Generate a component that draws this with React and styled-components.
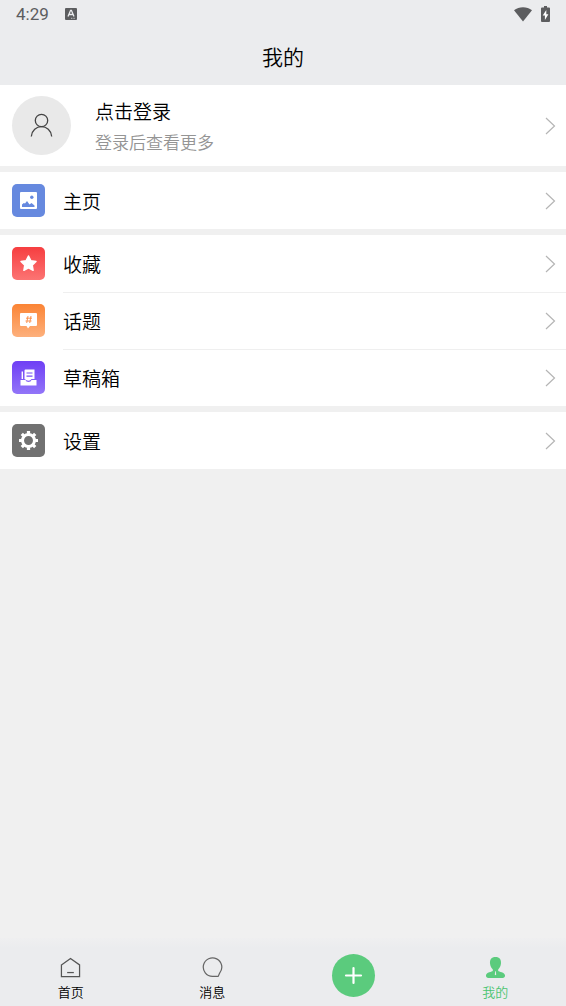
import React from "react";
import styled, { createGlobalStyle } from "styled-components";

const GlobalStyle = createGlobalStyle`
  * { box-sizing: border-box; }
  body {
    margin: 0;
    background: #f0f0f0;
    color: #000;
    font-family: Roboto, "Noto Sans CJK SC", sans-serif;
    font-weight: 350;
  }
  button { font: inherit; color: inherit; border: 0; padding: 0; background: none; cursor: pointer; }
  a { color: inherit; text-decoration: none; }
  svg { display: block; flex: none; }
`;

const Page = styled.div`
  min-height: 100vh;
  display: flex;
  flex-direction: column;
`;

const Header = styled.header`
  background: #ebecee;
`;

const StatusBar = styled.div`
  height: 28px;
  padding: 0 16px;
  display: flex;
  align-items: center;
  justify-content: space-between;
  color: #5c5d5f;
`;

const StatusGroup = styled.div`
  display: flex;
  align-items: center;
  gap: ${(p) => p.$gap}px;
`;

const Clock = styled.span`
  font-size: 17px;
  font-weight: 400;
  line-height: 28px;
`;

const Title = styled.h1`
  margin: 0;
  height: 57px;
  line-height: 60px;
  text-align: center;
  font-size: 21px;
  font-weight: inherit;
`;

const Main = styled.main`
  flex: 1;
  display: flex;
  flex-direction: column;
  gap: 6px;
`;

const Profile = styled.button`
  width: 100%;
  height: 81px;
  padding: 0 10px 0 12px;
  display: flex;
  align-items: center;
  text-align: left;
  background: #fff;
`;

const Avatar = styled.span`
  width: 59px;
  height: 59px;
  margin-right: 24px;
  border-radius: 50%;
  background: #e9e9e9;
  display: grid;
  place-items: center;
`;

const ProfileText = styled.span`
  flex: 1;
  padding-top: 4px;
  display: flex;
  flex-direction: column;
`;

const ProfileName = styled.span`
  font-size: 19px;
  line-height: 30px;
`;

const ProfileHint = styled.span`
  font-size: 17px;
  line-height: 30px;
  color: #949494;
`;

const Group = styled.nav`
  background: #fff;
`;

const Row = styled.a`
  height: 57px;
  padding-left: 12px;
  display: flex;
  align-items: center;
  gap: 18px;
`;

const Tile = styled.span`
  width: 33px;
  height: 33px;
  border-radius: 5px;
  background: ${(p) => p.$fill};
  display: grid;
  place-items: center;
`;

const RowBody = styled.span`
  flex: 1;
  height: 57px;
  padding-right: 10px;
  display: flex;
  align-items: center;
  justify-content: space-between;
  font-size: 19px;
  line-height: 28px;
  border-top: 1px solid ${(p) => (p.$divided ? "#efefef" : "transparent")};
`;

const RowLabel = styled.span`
  padding-top: 3px;
`;

const TabBar = styled.nav`
  position: sticky;
  bottom: 0;
  height: 68px;
  display: grid;
  grid-template-columns: repeat(4, 1fr);
  background: linear-gradient(#efeff0, #ebecee 10px);
`;

const Tab = styled.a`
  padding-top: 19px;
  display: flex;
  flex-direction: column;
  align-items: center;
  gap: 5px;
  font-size: 13px;
  line-height: 20px;
  color: ${(p) => (p.$active ? "#4cc471" : "#000")};
`;

const AddSlot = styled.div`
  display: grid;
  place-items: center;
  padding-top: 6px;
`;

const AddButton = styled.button`
  && {
    width: 43px;
    height: 43px;
    border-radius: 50%;
    background: #5bcb7d;
    display: grid;
    place-items: center;
  }
`;

const Chevron = () => (
  <svg width="12" height="20" viewBox="0 0 12 20" fill="none" stroke="#b5b5b5" strokeWidth="1.2">
    <path d="M2 2l8.500 8L2 18" />
  </svg>
);

const InputIcon = () => (
  <svg width="12" height="12" viewBox="0 0 12 12">
    <rect width="12" height="12" rx="1" fill="#5c5d5f" />
    <path d="M3 8.500L5.600 2.300h.8L9 8.500M4 6.500h4" fill="none" stroke="#ebecee" strokeWidth="1.300" />
    <path d="M6 10.300h4" stroke="#ebecee" strokeWidth=".7" strokeDasharray="1 .6" />
  </svg>
);

const WifiIcon = () => (
  <svg width="18" height="15" viewBox="0 0 18 15">
    <path d="M0 3.300C5-.9 13-.9 18 3.300L9 14.500z" fill="#5c5d5f" />
  </svg>
);

const BatteryIcon = () => (
  <svg width="9" height="16" viewBox="0 0 9 16">
    <path d="M3 0h3v1.600h2q1 0 1 1V15q0 1-1 1H1q-1 0-1-1V2.600q0-1 1-1h2z" fill="#5c5d5f" />
    <path d="M5.300 4L1.700 9.500h2.200V14l3.500-5.700H5.300z" fill="#fff" />
  </svg>
);

const PersonIcon = () => (
  <svg width="23" height="25" viewBox="0 0 23 25" fill="none" stroke="#444" strokeWidth="1.300">
    <circle cx="11.500" cy="7.500" r="6.200" />
    <path d="M1.300 23.500C1.800 17.500 6.500 13.700 11.500 13.700s9.700 3.800 10.200 9.800" />
  </svg>
);

const PictureIcon = () => (
  <svg width="17" height="17" viewBox="0 0 17 17">
    <rect width="17" height="17" rx="1" fill="#fff" />
    <circle cx="11.800" cy="5.200" r="1.700" fill="#6689df" />
    <path d="M2 15v-2.500l1.800-1.500 1.200.5L7 9l2.500 3.500 2-1.500 3 2.500V15z" fill="#6689df" />
  </svg>
);

const StarIcon = () => (
  <svg width="19" height="19" viewBox="0 0 19 19" fill="#fff" stroke="#fff" strokeWidth="1.500" strokeLinejoin="round">
    <path d="M9.500 2l2.300 4.700 5.200.8-3.800 3.600.9 5.200-4.600-2.400-4.600 2.400.9-5.200L2 7.500l5.200-.8z" />
  </svg>
);

const TopicIcon = () => (
  <svg width="17" height="17" viewBox="0 0 17 17">
    <path d="M1 1h15q1 0 1 1v11q0 1-1 1h-6L8 16.500 6.500 14H1q-1 0-1-1V2q0-1 1-1z" fill="#fff" />
    <path d="M8 4L6.700 11M11 4L9.700 11M6 6.200h6M5.500 9h6" stroke="#fb9350" strokeWidth="1" />
  </svg>
);

const DraftIcon = () => (
  <svg width="17" height="17" viewBox="0 0 17 17" fill="none">
    <path d="M.5 11h5q.5 2 3 2t3-2h5v5.500H.5z" fill="#fff" />
    <path d="M2.300 10V2.500" stroke="#fff" strokeWidth="1.400" />
    <path d="M5.500.5h9v9.500h-3q-1 1.700-3 1.700T4.500 10V1.500q0-1 1-1z" fill="#fff" />
    <path d="M6.500 4h6M6.500 7.200h6" stroke="#7650f5" strokeWidth="1.200" />
  </svg>
);

const GearIcon = () => (
  <svg width="19" height="19" viewBox="0 0 20 20" fill="none" stroke="#fff">
    <circle cx="10" cy="10" r="6.300" strokeWidth="3.200" />
    {[0, 45, 90, 135].map((angle) => (
      <path key={angle} d="M10 0v3M10 17v3" strokeWidth="3.400" transform={`rotate(${angle} 10 10)`} />
    ))}
  </svg>
);

const HomeIcon = () => (
  <svg width="21" height="21" viewBox="0 0 22 22" fill="none" stroke="#555" strokeWidth="1.300">
    <path d="M1.500 8.300L11 1.500l9.500 6.800v12.200h-19z" />
    <path d="M7.500 16.300h7" />
  </svg>
);

const MessageIcon = () => (
  <svg width="21" height="21" viewBox="0 0 22 22" fill="none" stroke="#666" strokeWidth="1.300">
    <path d="M17 20.300H11A9.700 9.700 0 1 1 18.500 16.800z" strokeLinejoin="round" />
  </svg>
);

const MineIcon = () => (
  <svg width="21" height="21" viewBox="0 0 22 22">
    <path d="M11 0c4.200 0 6.200 2.800 5.700 7-.3 2.700-1.400 4.500-2.900 6v1.500c.5 1.200 7.200 1.500 7.200 5 0 1.500-1 2.500-2.500 2.500h-15C2 22 1 21 1 19.500c0-3.500 6.700-3.800 7.200-5V13c-1.500-1.500-2.600-3.300-2.900-6C4.800 2.800 6.800 0 11 0z" fill="#5bcb7d" />
    <path d="M10.700 15h.7l.3 3.500-.7.700-.7-.7z" fill="#ebecee" />
  </svg>
);

const PlusIcon = () => (
  <svg width="19" height="19" viewBox="0 0 19 19" stroke="#fff" strokeWidth="2.200" strokeLinecap="round">
    <path d="M9.500 2v15M2 9.500h15" />
  </svg>
);

const groups = [
  [{ label: "主页", fill: "#6689df", Icon: PictureIcon }],
  [
    { label: "收藏", fill: "linear-gradient(#f63e40, #fc7473)", Icon: StarIcon },
    { label: "话题", fill: "linear-gradient(#fb8435, #fdb07c)", Icon: TopicIcon },
    { label: "草稿箱", fill: "linear-gradient(#6f3ff5, #9275f8)", Icon: DraftIcon },
  ],
  [{ label: "设置", fill: "#717171", Icon: GearIcon }],
];

export default function App() {
  return (
    <Page>
      <GlobalStyle />
      <Header>
        <StatusBar>
          <StatusGroup $gap={16}>
            <Clock>4:29</Clock>
            <InputIcon />
          </StatusGroup>
          <StatusGroup $gap={9}>
            <WifiIcon />
            <BatteryIcon />
          </StatusGroup>
        </StatusBar>
        <Title>我的</Title>
      </Header>
      <Main>
        <Profile>
          <Avatar><PersonIcon /></Avatar>
          <ProfileText>
            <ProfileName>点击登录</ProfileName>
            <ProfileHint>登录后查看更多</ProfileHint>
          </ProfileText>
          <Chevron />
        </Profile>
        {groups.map((rows) => (
          <Group key={rows[0].label}>
            {rows.map(({ label, fill, Icon }, index) => (
              <Row key={label} href="#">
                <Tile $fill={fill}><Icon /></Tile>
                <RowBody $divided={index > 0}>
                  <RowLabel>{label}</RowLabel>
                  <Chevron />
                </RowBody>
              </Row>
            ))}
          </Group>
        ))}
      </Main>
      <TabBar>
        <Tab href="#"><HomeIcon />首页</Tab>
        <Tab href="#"><MessageIcon />消息</Tab>
        <AddSlot>
          <AddButton aria-label="发布"><PlusIcon /></AddButton>
        </AddSlot>
        <Tab href="#" $active><MineIcon />我的</Tab>
      </TabBar>
    </Page>
  );
}
